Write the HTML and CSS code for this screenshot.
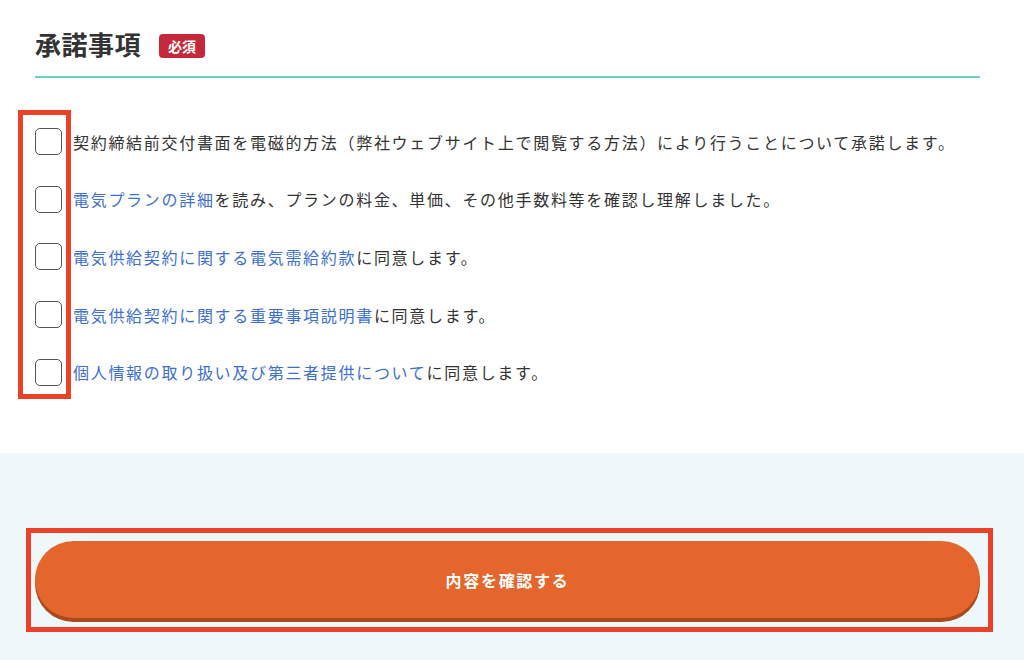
FILE: index.html
```html
<!DOCTYPE html>
<html lang="ja">

<head>
    <meta charset="UTF-8">
    <meta name="viewport" content="width=device-width, initial-scale=1.0">
    <title>承諾事項</title>

    <link rel="stylesheet" href="styles.css">
</head>

<body>
    <section class="consent">
        <div class="consent-head">
            <h2>承諾事項</h2>
            <span class="required-badge">必須</span>
        </div>

        <!-- checkbox list. the red box is just a marker over the column -->
        <ul class="consent-list">
            <li>
                <span class="check-box"></span>
                <span>契約締結前交付書面を電磁的方法（弊社ウェブサイト上で閲覧する方法）により行うことについて承諾します。</span>
            </li>
            <li>
                <span class="check-box"></span>
                <span><a href="#">電気プランの詳細</a>を読み、プランの料金、単価、その他手数料等を確認し理解しました。</span>
            </li>
            <li>
                <span class="check-box"></span>
                <span><a href="#">電気供給契約に関する電気需給約款</a>に同意します。</span>
            </li>
            <li>
                <span class="check-box"></span>
                <span><a href="#">電気供給契約に関する重要事項説明書</a>に同意します。</span>
            </li>
            <li>
                <span class="check-box"></span>
                <span><a href="#">個人情報の取り扱い及び第三者提供について</a>に同意します。</span>
            </li>
            <div class="mark-box mark-checks"></div>
        </ul>
    </section>

    <section class="confirm-area">
        <div class="confirm-wrap">
            <button id="confirm-btn">内容を確認する</button>
            <div class="mark-box mark-button"></div>
        </div>
    </section>
</body>

</html>
```

FILE: styles.css
```css
body {
    margin: 0;
    background-color: white;
    color: #333;
    font-family: "Noto Sans CJK JP", "Noto Sans", sans-serif;
}

.consent {
    padding: 26px 44px 0 35px;
    height: 453px;
    box-sizing: border-box;
}

.consent-head {
    display: flex;
    align-items: center;
    gap: 18px;
    padding-bottom: 14px;
    border-bottom: 2px solid #6fcfc8;
}

.consent-head h2 {
    margin: 0;
    font-size: 26px;
    line-height: 36px;
    letter-spacing: 0.5px;
    font-weight: bold;
}

.required-badge {
    background: #c4293b;
    color: white;
    font-size: 14px;
    font-weight: bold;
    line-height: 24px;
    padding: 0 9px;
    border-radius: 4px;
    margin-top: 3px;
}

.consent-list {
    position: relative;
    list-style: none;
    margin: 35px 0 0;
    padding: 0;
}

.consent-list li {
    display: flex;
    align-items: center;
    gap: 11px;
    height: 57.6px;
    font-size: 16px;
    letter-spacing: 1.7px;
}

.consent-list a {
    color: #3d6fcf;
    text-decoration: none;
}

.check-box {
    flex: none;
    width: 25px;
    height: 25px;
    border: 1px solid #555;
    border-radius: 5px;
    background: white;
}

.mark-box {
    position: absolute;
    border: 5px solid #ea4128;
    pointer-events: none;
}

.mark-checks {
    top: -3px;
    bottom: 2px;
    left: -17px;
    width: 43px;
}

.confirm-area {
    background-color: #eef7f9;
    padding: 88px 44px 40px 35px;
    height: 207px;
    box-sizing: border-box;
}

.confirm-wrap {
    position: relative;
}

#confirm-btn {
    display: block;
    width: 100%;
    height: 77px;
    border: none;
    border-radius: 40px;
    background-color: #e5662c;
    box-shadow: 0 4px 0 #a94a1d;
    color: white;
    font-family: inherit;
    font-size: 16px;
    font-weight: bold;
    letter-spacing: 1.7px;
    cursor: pointer;
}

#confirm-btn:hover {
    background-color: #d85a21;
}

.mark-button {
    top: -13px;
    bottom: -14px;
    left: -9px;
    right: -13px;
}
```
